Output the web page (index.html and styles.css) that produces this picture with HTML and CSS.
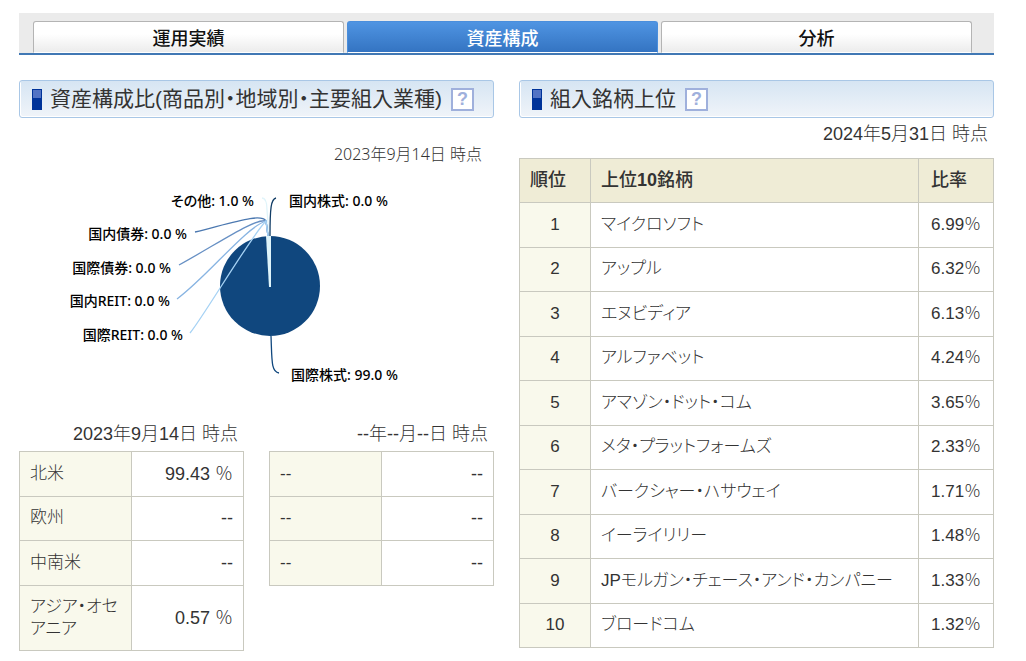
FILE: index.html
```html
<!DOCTYPE html>
<html lang="ja">
<head>
    <meta charset="UTF-8">
    <meta name="viewport" content="width=device-width, initial-scale=1.0">
    <title>資産構成</title>
    <link rel="stylesheet" href="styles.css">
</head>
<body>
    <div class="page">
        <!-- タブ -->
        <nav class="tabs">
            <a class="tab" href="#performance">運用実績</a>
            <a class="tab active" href="#assets">資産構成</a>
            <a class="tab" href="#analysis">分析</a>
        </nav>

        <main class="columns">
            <!-- 資産構成比 -->
            <section class="column">
                <h2 class="heading">資産構成比(商品別・地域別・主要組入業種)<button class="help" type="button">?</button></h2>
                <p class="chart-date">2023年9月14日 時点</p>

                <svg class="chart" viewBox="0 0 475 240">
                    <!-- 円グラフ -->
                    <circle cx="251" cy="116" r="50" fill="#10477e"/>
                    <path d="M250 117 L247 66 H252 V117 Z" fill="#def4fa"/>
                    <!-- 引き出し線 -->
                    <g fill="none" stroke-width="1.3">
                        <path d="M243 28 Q248 28 248 40 L250 66" stroke="#e0f4fa"/>
                        <path d="M176 62 C216 52 242 43 247 51 L249 66" stroke="#4b78b0"/>
                        <path d="M160 95 C200 73 236 48 247 51 L249 66" stroke="#6790c4"/>
                        <path d="M158 129 C190 105 226 58 247 51 L249 66" stroke="#88b4e2"/>
                        <path d="M171 163 C185 146 232 66 247 51 L249 66" stroke="#a6d2f4"/>
                        <path d="M257 28 C252 29 251 38 251 66" stroke="#123d66"/>
                        <path d="M252 166 C253 190 252 202 260 203" stroke="#10477e"/>
                    </g>
                    <g class="chart-labels" text-anchor="end">
                        <text x="235" y="36">その他: 1.0 %</text>
                        <text x="168" y="69">国内債券: 0.0 %</text>
                        <text x="152" y="103">国際債券: 0.0 %</text>
                        <text x="151" y="136">国内REIT: 0.0 %</text>
                        <text x="164" y="170">国際REIT: 0.0 %</text>
                    </g>
                    <g class="chart-labels">
                        <text x="270" y="36">国内株式: 0.0 %</text>
                        <text x="272" y="210">国際株式: 99.0 %</text>
                    </g>
                </svg>

                <div class="regions">
                    <div>
                        <p class="date">2023年9月14日 時点</p>
                        <table class="region-table">
                            <tr><th>北米</th><td>99.43 ％</td></tr>
                            <tr><th>欧州</th><td>--</td></tr>
                            <tr><th>中南米</th><td>--</td></tr>
                            <tr class="tall"><th>アジア・オセアニア</th><td>0.57 ％</td></tr>
                        </table>
                    </div>
                    <div>
                        <p class="date">--年--月--日 時点</p>
                        <table class="region-table">
                            <tr><th>--</th><td>--</td></tr>
                            <tr><th>--</th><td>--</td></tr>
                            <tr><th>--</th><td>--</td></tr>
                        </table>
                    </div>
                </div>
            </section>

            <!-- 組入銘柄上位 -->
            <section class="column">
                <h2 class="heading">組入銘柄上位<button class="help" type="button">?</button></h2>
                <p class="date holdings-date">2024年5月31日 時点</p>
                <table class="holdings">
                    <thead>
                        <tr><th class="rank">順位</th><th>上位<b>10</b>銘柄</th><th class="ratio">比率</th></tr>
                    </thead>
                    <tbody>
                        <tr><td>1</td><td>マイクロソフト</td><td>6.99％</td></tr>
                        <tr><td>2</td><td>アップル</td><td>6.32％</td></tr>
                        <tr><td>3</td><td>エヌビディア</td><td>6.13％</td></tr>
                        <tr><td>4</td><td>アルファベット</td><td>4.24％</td></tr>
                        <tr><td>5</td><td>アマゾン・ドット・コム</td><td>3.65％</td></tr>
                        <tr><td>6</td><td>メタ・プラットフォームズ</td><td>2.33％</td></tr>
                        <tr><td>7</td><td>バークシャー・ハサウェイ</td><td>1.71％</td></tr>
                        <tr><td>8</td><td>イーライリリー</td><td>1.48％</td></tr>
                        <tr><td>9</td><td>JPモルガン・チェース・アンド・カンパニー</td><td>1.33％</td></tr>
                        <tr><td>10</td><td>ブロードコム</td><td>1.32％</td></tr>
                    </tbody>
                </table>
            </section>
        </main>
    </div>
</body>
</html>
```
FILE: styles.css
```css
* {
    box-sizing: border-box;
}

body {
    margin: 0;
    background-color: #fff;
    color: #333;
    font-family: "Liberation Sans", "Noto Sans CJK JP", sans-serif;
    font-size: 18px;
    font-weight: 300;
    line-height: 22px;
    font-feature-settings: "palt"; /* かなを詰めて組む */
}

p, h2 {
    margin: 0;
}

.page {
    padding: 13px 32px 10px 19px;
}

/* タブ */
.tabs {
    display: flex;
    gap: 3px;
    padding: 8px 22px 0 14px;
    background-color: #ebebeb;
    border-bottom: 2px solid #4178b4;
}

.tab {
    flex: 1;
    height: 32px;
    padding-top: 6px;
    border: 1px solid #b4b4b4;
    border-bottom: 1px solid #fff;
    border-radius: 3px 3px 0 0;
    background: linear-gradient(#fff 40%, #ececec);
    color: #111;
    font-weight: 500;
    text-align: center;
    text-decoration: none;
}

.tab.active {
    border-color: #4a8edc #4a8edc #fff;
    background: linear-gradient(#4f94e2, #3474c2);
    color: #fff;
}

/* 2カラム */
.columns {
    display: grid;
    grid-template-columns: 1fr 1fr;
    gap: 25px;
    padding-top: 25px;
}

.heading {
    display: flex;
    align-items: center;
    height: 38px;
    padding-left: 12px;
    border: 1px solid #a9c7e6;
    border-radius: 3px;
    background: linear-gradient(#d6e5f3, #f0f4f9);
    box-shadow: inset 1px -1px 0 #fff;
    font-size: 21px;
    font-weight: 400;
    white-space: nowrap;
}

.heading::before {
    content: "";
    width: 8px;
    height: 19px;
    margin-right: 8px;
    border: 1px solid #039;
    background: linear-gradient(#5273c4 8px, #039 8px);
}

.help {
    width: 23px;
    height: 23px;
    margin-left: 9px;
    padding: 0;
    border: 2px solid #9fb0dc;
    background-color: #fff;
    color: #9fb0dc;
    font: bold 18px/19px "Liberation Sans", sans-serif;
}

.date {
    padding-right: 6px;
    text-align: right;
}

/* 円グラフ */
.chart-date {
    padding: 25px 12px 0 0;
    font-family: "Noto Sans", "Noto Sans CJK JP", sans-serif;
    font-size: 16px;
    text-align: right;
}

.chart {
    display: block;
    width: 100%;
    margin-top: 5px;
}

.chart-labels {
    fill: #000;
    font-family: "Noto Sans", "Noto Sans CJK JP", sans-serif;
    font-size: 14px;
    font-weight: 500;
}

/* 表 */
table {
    width: 100%;
    border-collapse: collapse;
    table-layout: fixed;
}

th, td {
    padding: 0 10px 1px;
    border: 1px solid #c9c9bf;
    font-weight: inherit;
    text-align: left;
}

tr {
    height: 44px;
}

tbody tr:nth-child(odd) {
    height: 45px;
}

.regions {
    display: grid;
    grid-template-columns: 1fr 1fr;
    gap: 25px;
    padding-top: 13px;
}

.region-table {
    margin-top: 6px;
}

.region-table th {
    background-color: #f9f9ec;
    font-size: 17px;
}

.region-table td {
    text-align: right;
}

.region-table .tall {
    height: 65px;
}

.holdings-date {
    padding-top: 5px;
}

.holdings {
    margin-top: 13px;
}

.holdings th {
    background-color: #efecd6;
    font-weight: 500;
}

.holdings .rank {
    width: 71px;
}

.holdings .ratio {
    width: 75px;
}

.holdings td {
    font-size: 17px;
}

.holdings th:last-child,
.holdings td:last-child {
    padding-left: 12px;
}

.holdings td:first-child {
    background-color: #f9f9ec;
    text-align: center;
}
```
